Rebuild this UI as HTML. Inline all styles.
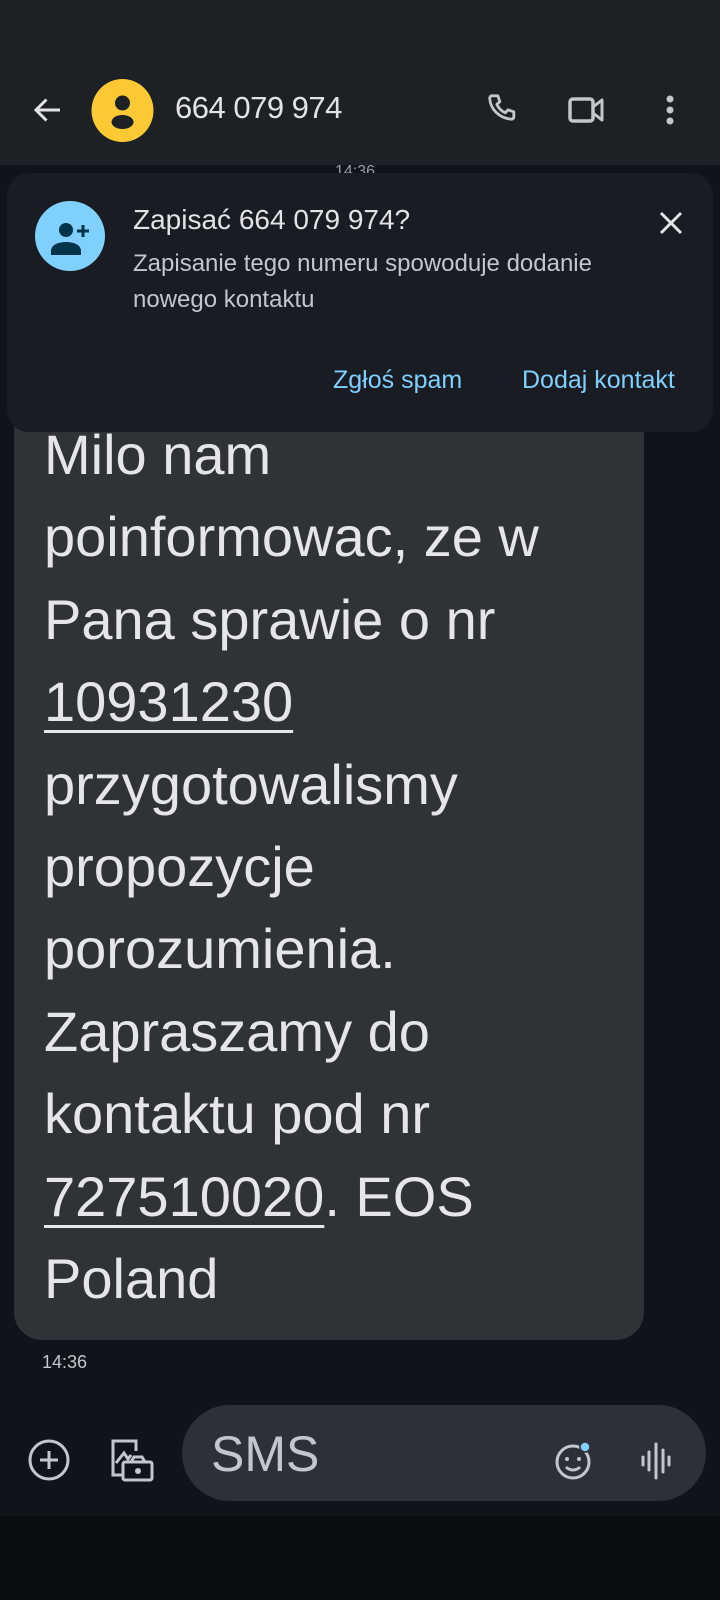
<!DOCTYPE html>
<html><head><meta charset="utf-8"><style>
*{margin:0;padding:0;box-sizing:border-box}
body{width:720px;height:1600px;background:#10141a;font-family:"Liberation Sans",sans-serif;position:relative;overflow:hidden;color:#e3e3e6}
.abs{position:absolute}
</style></head><body>
<div class="abs" style="left:0;top:0;width:720px;height:165px;background:#1d2024"></div>
<svg class="abs" style="left:30px;top:92px" width="36" height="36" viewBox="0 0 24 24"><path d="M20 12H5M11 5l-7 7 7 7" stroke="#e3e3e6" stroke-width="2" fill="none"/></svg>
<svg class="abs" style="left:91px;top:79px" width="63" height="63" viewBox="0 0 63 63"><ellipse cx="31.5" cy="31.5" rx="31" ry="31.5" fill="#fcc934"/><circle cx="31.5" cy="24" r="7.5" fill="#1d2024"/><ellipse cx="31.5" cy="43" rx="11" ry="7" fill="#1d2024"/></svg>
<div class="abs" style="left:175px;top:90px;font-size:31px;color:#e3e3e6;letter-spacing:-0.5px">664 079 974</div>
<svg class="abs" style="left:482px;top:90px" width="40" height="40" viewBox="0 0 24 24"><path d="M6.5 3.5h3l1.2 3.5-1.8 1.6c1 2.3 2.8 4.1 5.1 5.1l1.6-1.8 3.5 1.2v3c0 .8-.7 1.5-1.5 1.4C10.3 16.9 5.1 11.7 4.6 4.9 4.6 4.1 5.2 3.5 6 3.5z" stroke="#c4c6cc" stroke-width="1.7" fill="none" stroke-linejoin="round"/></svg>
<svg class="abs" style="left:568px;top:96px" width="38" height="28" viewBox="0 0 38 28"><rect x="2" y="3" width="23" height="22" rx="3" stroke="#c4c6cc" stroke-width="3.5" fill="none"/><path d="M25 11l9-7v20l-9-7z" stroke="#c4c6cc" stroke-width="3" fill="none" stroke-linejoin="round"/></svg>
<svg class="abs" style="left:665px;top:94px" width="10" height="34" viewBox="0 0 10 34"><circle cx="5" cy="5" r="3.5" fill="#c4c6cc"/><circle cx="5" cy="16" r="3.5" fill="#c4c6cc"/><circle cx="5" cy="27" r="3.5" fill="#c4c6cc"/></svg>
<div class="abs" style="left:335px;top:163px;font-size:16px;color:#9a9da3">14:36</div>

<div class="abs" style="left:14px;top:240px;width:630px;height:1100px;background:#2f3236;border-radius:28px"></div>
<div class="abs" style="left:44px;top:414px;font-size:56px;line-height:82.4px;color:#e6e6e8;white-space:pre">Milo nam
poinformowac, ze w
Pana sprawie o nr
<u style="text-underline-offset:9px;text-decoration-thickness:3px">10931230</u>
przygotowalismy
propozycje
porozumienia.
Zapraszamy do
kontaktu pod nr
<u style="text-underline-offset:9px;text-decoration-thickness:3px">727510020</u>. EOS
Poland</div>
<div class="abs" style="left:42px;top:1352px;font-size:18px;color:#c4c6cc">14:36</div>

<div class="abs" style="left:7px;top:173px;width:706px;height:259px;background:#191c22;border-radius:22px"></div>
<svg class="abs" style="left:35px;top:201px" width="70" height="70" viewBox="0 0 70 70"><ellipse cx="35" cy="35" rx="35" ry="35" fill="#7fcfff"/><circle cx="31" cy="29" r="7" fill="#003549"/><path d="M16 50c0-6 7-9 15-9s15 3 15 9v4H16z" fill="#003549"/><path d="M48 24v12M42 30h12" stroke="#003549" stroke-width="3"/></svg>
<div class="abs" style="left:133px;top:204px;font-size:28px;color:#e3e3e6">Zapisać 664 079 974?</div>
<div class="abs" style="left:133px;top:246px;font-size:24px;line-height:36px;color:#c4c6cc;width:520px">Zapisanie tego numeru spowoduje dodanie nowego kontaktu</div>
<svg class="abs" style="left:658px;top:210px" width="26" height="26" viewBox="0 0 26 26"><path d="M3 3l20 20M23 3L3 23" stroke="#e3e3e6" stroke-width="3"/></svg>
<div class="abs" style="left:333px;top:366px;font-size:25px;color:#7fcfff">Zgłoś spam</div>
<div class="abs" style="left:522px;top:366px;font-size:25px;color:#7fcfff">Dodaj kontakt</div>

<svg class="abs" style="left:27px;top:1438px" width="44" height="44" viewBox="0 0 44 44"><circle cx="22" cy="22" r="19" stroke="#c4c6cc" stroke-width="3" fill="none"/><path d="M22 13v18M13 22h18" stroke="#c4c6cc" stroke-width="3"/></svg>
<svg class="abs" style="left:110px;top:1437px" width="45" height="46" viewBox="0 0 45 46"><path d="M12 38H3V4h23v10" stroke="#c4c6cc" stroke-width="3" fill="none"/><path d="M6 26l8-10 4 6 3-4" stroke="#c4c6cc" stroke-width="3" fill="none"/><rect x="13" y="25" width="29" height="18" rx="2" stroke="#c4c6cc" stroke-width="3" fill="none"/><path d="M21 25l3-5h8l3 5" stroke="#c4c6cc" stroke-width="3" fill="none"/><circle cx="28" cy="34" r="3" fill="#c4c6cc"/></svg>
<div class="abs" style="left:182px;top:1405px;width:524px;height:96px;background:#2d3038;border-radius:48px"></div>
<div class="abs" style="left:211px;top:1425px;font-size:50px;color:#c4c6cc">SMS</div>
<svg class="abs" style="left:553px;top:1440px" width="40" height="40" viewBox="0 0 40 40"><circle cx="20" cy="22" r="16" stroke="#c4c6cc" stroke-width="3" fill="none"/><circle cx="14" cy="19" r="2" fill="#c4c6cc"/><circle cx="26" cy="19" r="2" fill="#c4c6cc"/><path d="M13 27c4 4 10 4 14 0" stroke="#c4c6cc" stroke-width="3" fill="none"/><circle cx="32" cy="7" r="5" fill="#7fcfff" stroke="#2d3038" stroke-width="1.5"/></svg>
<svg class="abs" style="left:640px;top:1442px" width="32" height="38" viewBox="0 0 32 38"><path d="M3 15v8M9 10v18M16 2v34M23 8v22M29 15v8" stroke="#c4c6cc" stroke-width="3" stroke-linecap="round"/></svg>
<div class="abs" style="left:0;top:1516px;width:720px;height:84px;background:#0a0d10"></div>
</body></html>
